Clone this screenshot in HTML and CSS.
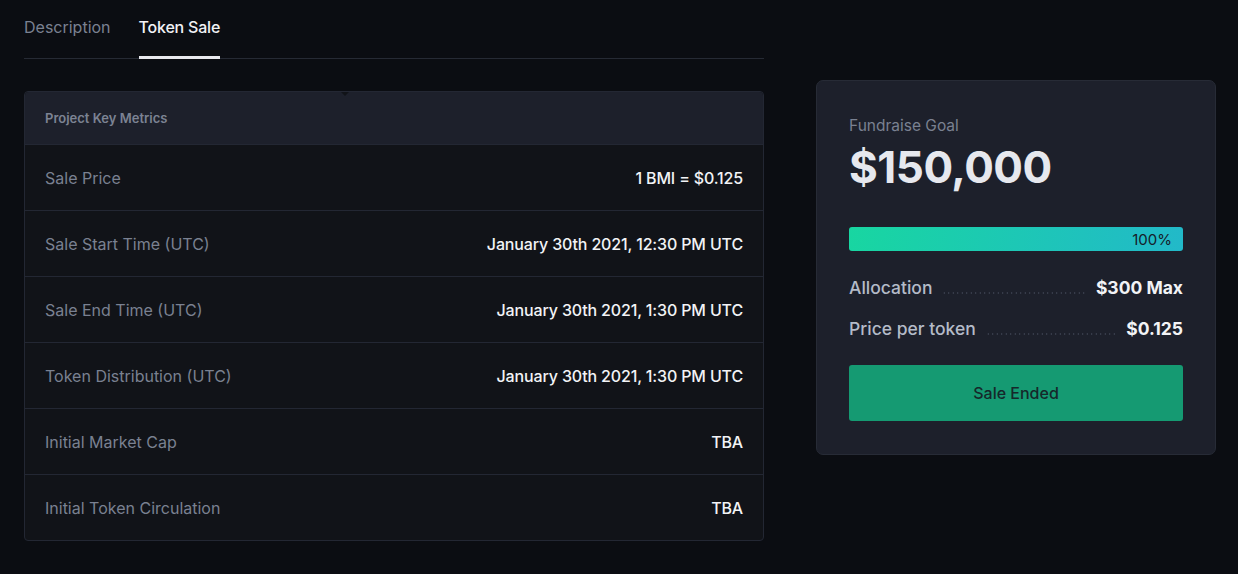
FILE: index.html
```html
<!DOCTYPE html>
<html lang="en">
<head>
    <meta charset="UTF-8">
    <meta name="viewport" content="width=device-width, initial-scale=1.0">
    <title>Token Sale</title>
    <link rel="stylesheet" href="styles.css">
</head>
<body>

    <div class="page">
        <!-- Left column: tabs + metrics table -->
        <div class="main">
            <div class="tabs">
                <a class="tab">Description</a>
                <a class="tab active">Token Sale</a>
            </div>

            <div class="metrics">
                <span class="caret"></span>
                <div class="metrics-head">Project Key Metrics</div>
                <div class="metric-row">
                    <span class="metric-label">Sale Price</span>
                    <span class="metric-value">1 BMI = $0.125</span>
                </div>
                <div class="metric-row">
                    <span class="metric-label">Sale Start Time (UTC)</span>
                    <span class="metric-value">January 30th 2021, 12:30 PM UTC</span>
                </div>
                <div class="metric-row">
                    <span class="metric-label">Sale End Time (UTC)</span>
                    <span class="metric-value">January 30th 2021, 1:30 PM UTC</span>
                </div>
                <div class="metric-row">
                    <span class="metric-label">Token Distribution (UTC)</span>
                    <span class="metric-value">January 30th 2021, 1:30 PM UTC</span>
                </div>
                <div class="metric-row">
                    <span class="metric-label">Initial Market Cap</span>
                    <span class="metric-value">TBA</span>
                </div>
                <div class="metric-row">
                    <span class="metric-label">Initial Token Circulation</span>
                    <span class="metric-value">TBA</span>
                </div>
            </div>
        </div>

        <!-- Right column: fundraise card -->
        <div class="side">
            <div class="goal-card">
                <p class="goal-label">Fundraise Goal</p>
                <h2 class="goal-amount">$150,000</h2>

                <div class="progress">
                    <div class="progress-fill" style="width: 100%;">100%</div>
                </div>

                <div class="info-row">
                    <span class="info-label">Allocation</span>
                    <span class="dots"></span>
                    <span class="info-value">$300 Max</span>
                </div>
                <div class="info-row">
                    <span class="info-label">Price per token</span>
                    <span class="dots"></span>
                    <span class="info-value">$0.125</span>
                </div>

                <button class="sale-btn" disabled>Sale Ended</button>
            </div>
        </div>
    </div>

</body>
</html>
```

FILE: styles.css
```css
body {
    font-family: Inter, "Noto Sans", sans-serif;
    background-color: #0b0d12;
    color: #e6e8ee;
    margin: 0;
}

.page {
    display: flex;
    align-items: flex-start;
    padding: 0 22px 0 24px;
    gap: 52px;
}

/* Left column */
.main {
    width: 740px;
}

.tabs {
    display: flex;
    gap: 28px;
    border-bottom: 1px solid #262a34;
    height: 58px;
}

.tab {
    font-size: 16px;
    color: #7a8191;
    padding-top: 17px;
    box-sizing: border-box;
    height: 59px;
    cursor: pointer;
}

.tab.active {
    color: #f2f3f6;
    font-weight: 500;
    letter-spacing: -0.2px;
    border-bottom: 3px solid #e8e9ee;
}

.metrics {
    position: relative;
    margin-top: 32px;
    background-color: #111318;
    border: 1px solid #232733;
    border-radius: 4px;
}

.caret {
    position: absolute;
    top: 0;
    left: 316px;
    width: 0;
    height: 0;
    border-left: 4px solid transparent;
    border-right: 4px solid transparent;
    border-top: 4px solid #111318;
}

.metrics-head {
    background-color: #1d202b;
    height: 52px;
    padding: 0 20px;
    display: flex;
    align-items: center;
    font-size: 13px;
    font-weight: 600;
    color: #7c8393;
    border-bottom: 1px solid #232733;
    border-radius: 4px 4px 0 0;
}

.metric-row {
    display: flex;
    justify-content: space-between;
    align-items: center;
    height: 65px;
    padding: 0 20px;
    border-bottom: 1px solid #232733;
    font-size: 16px;
}

.metric-row:last-child {
    border-bottom: none;
}

.metric-label {
    color: #7a8191;
}

.metric-value {
    color: #f2f3f6;
    font-weight: 500;
    letter-spacing: -0.15px;
}

/* Right column */
.side {
    padding-top: 80px;
}

.goal-card {
    width: 334px;
    padding: 33px 32px 33px;
    background-color: #1d202b;
    border: 1px solid #272b36;
    border-radius: 7px;
}

.goal-label {
    font-size: 15.5px;
    color: #7a8191;
    margin: 2px 0 0;
}

.goal-amount {
    font-size: 44px;
    font-weight: 700;
    color: #e6e8ee;
    margin: 5px 0 0;
    letter-spacing: -0.5px;
    line-height: 54px;
}

.progress {
    margin-top: 33px;
    height: 24px;
    border-radius: 3px;
    background-color: #2a2e3a;
    overflow: hidden;
}

.progress-fill {
    height: 100%;
    background: linear-gradient(100deg, #18d6a1 0%, #22b9c9 100%);
    color: #16202a;
    font-size: 15px;
    text-align: right;
    padding-right: 11px;
    box-sizing: border-box;
    line-height: 25px;
}

.info-row {
    display: flex;
    align-items: center;
    margin-top: 26px;
    font-size: 17.5px;
    line-height: 22px;
}

.info-row + .info-row {
    margin-top: 19px;
}

.info-label {
    color: #b4bbc8;
    font-weight: 500;
}

.dots {
    flex: 1;
    height: 2px;
    margin: 9px 9px 0 10px;
    background-image: radial-gradient(circle, #3f4554 0.7px, transparent 1px);
    background-size: 4.5px 2px;
    background-repeat: repeat-x;
}

.info-value {
    color: #f2f3f6;
    font-weight: 700;
}

.sale-btn {
    display: block;
    width: 100%;
    height: 56px;
    margin-top: 25px;
    border: none;
    border-radius: 3px;
    background-color: #159a72;
    color: #15282a;
    font-family: Inter, "Noto Sans", sans-serif;
    font-size: 16px;
    font-weight: 500;
}
```
